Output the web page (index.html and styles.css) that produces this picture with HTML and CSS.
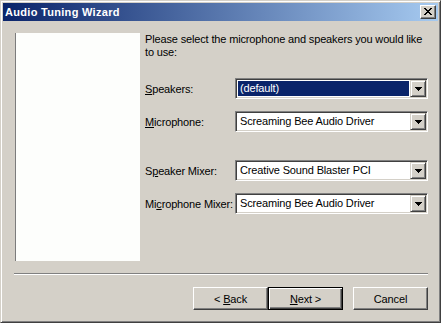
FILE: index.html
```html
<!DOCTYPE html>
<html lang="en">
  <head>
    <meta charset="UTF-8" />
    <meta name="viewport" content="width=device-width, initial-scale=1.0" />
    <title>Audio Tuning Wizard</title>
    <link rel="stylesheet" href="styles.css">
  </head>
  <body>
    <div class="window">
      <div class="titlebar">
        <span class="title">Audio Tuning Wizard</span>
        <button class="close-btn" aria-label="Close">
          <svg width="8" height="7" viewBox="0 0 8 7" shape-rendering="crispEdges">
            <path d="M0 0h2v1h-2zM6 0h2v1h-2zM1 1h2v1h-2zM5 1h2v1h-2zM2 2h4v1h-4zM3 3h2v1h-2zM2 4h4v1h-4zM1 5h2v1h-2zM5 5h2v1h-2zM0 6h2v1h-2zM6 6h2v1h-2z" fill="#000"/>
          </svg>
        </button>
      </div>
      <div class="client">
        <div class="main">
          <div class="picture"></div>
          <div class="content">
            <p class="intro">Please select the microphone and speakers you would like<br>to use:</p>
            <div class="field first">
              <span class="label"><u>S</u>peakers:</span>
              <div class="combo">
                <span class="value selected">(default)</span>
                <span class="drop"><svg width="7" height="4" viewBox="0 0 7 4" shape-rendering="crispEdges"><path d="M0 0h7v1h-7zM1 1h5v1h-5zM2 2h3v1h-3zM3 3h1v1h-1z" fill="#000"/></svg></span>
              </div>
            </div>
            <div class="field">
              <span class="label"><u>M</u>icrophone:</span>
              <div class="combo">
                <span class="value">Screaming Bee Audio Driver</span>
                <span class="drop"><svg width="7" height="4" viewBox="0 0 7 4" shape-rendering="crispEdges"><path d="M0 0h7v1h-7zM1 1h5v1h-5zM2 2h3v1h-3zM3 3h1v1h-1z" fill="#000"/></svg></span>
              </div>
            </div>
            <div class="field group">
              <span class="label">S<u>p</u>eaker Mixer:</span>
              <div class="combo">
                <span class="value">Creative Sound Blaster PCI</span>
                <span class="drop"><svg width="7" height="4" viewBox="0 0 7 4" shape-rendering="crispEdges"><path d="M0 0h7v1h-7zM1 1h5v1h-5zM2 2h3v1h-3zM3 3h1v1h-1z" fill="#000"/></svg></span>
              </div>
            </div>
            <div class="field">
              <span class="label">Mi<u>c</u>rophone Mixer:</span>
              <div class="combo">
                <span class="value">Screaming Bee Audio Driver</span>
                <span class="drop"><svg width="7" height="4" viewBox="0 0 7 4" shape-rendering="crispEdges"><path d="M0 0h7v1h-7zM1 1h5v1h-5zM2 2h3v1h-3zM3 3h1v1h-1z" fill="#000"/></svg></span>
              </div>
            </div>
          </div>
        </div>
        <div class="separator"></div>
        <div class="buttons">
          <button class="btn">&lt; <u>B</u>ack</button>
          <button class="btn default"><u>N</u>ext &gt;</button>
          <button class="btn cancel">Cancel</button>
        </div>
      </div>
    </div>
  </body>
</html>
```

FILE: styles.css
```css
/* Base */
html,
body {
  margin: 0;
  padding: 0;
  background-color: #d4d0c8;
  font-family: "Liberation Sans", Arial, sans-serif;
  font-size: 11px;
  letter-spacing: -0.15px;
  color: #000;
}

/* Window frame */
.window {
  width: 441px;
  height: 323px;
  box-sizing: border-box;
  border: 1px solid;
  border-color: #d4d0c8 #404040 #404040 #d4d0c8;
  box-shadow: inset 1px 1px #fff, inset -1px -1px #808080;
  padding: 2px;
  display: flex;
  flex-direction: column;
  background-color: #d4d0c8;
}

.titlebar {
  height: 18px;
  flex: none;
  display: flex;
  align-items: center;
  justify-content: space-between;
  padding: 0 2px;
  background: linear-gradient(to right, #0a246a, #a6caf0);
}

.title {
  color: #fff;
  font-weight: bold;
  font-size: 11px;
  letter-spacing: 0.3px;
}

.close-btn {
  width: 16px;
  height: 14px;
  padding: 0;
  margin: 0;
  box-sizing: border-box;
  display: flex;
  align-items: center;
  justify-content: center;
  background-color: #d4d0c8;
  border: 1px solid;
  border-color: #fff #404040 #404040 #fff;
  box-shadow: inset -1px -1px #808080;
}

.close-btn svg {
  display: block;
  margin: 0 1px 1px 0;
}

/* Client area */
.client {
  flex: 1;
  display: flex;
  flex-direction: column;
  padding: 12px 10px 0 11px;
}

.main {
  display: flex;
  height: 228px;
}

.picture {
  width: 125px;
  margin-left: 1px;
  box-sizing: border-box;
  border-left: 1px solid #7c7c7c;
  background-color: #fdfefc;
}

.content {
  flex: 1;
  margin-left: 5px;
}

.intro {
  margin: 0 0 19px;
  line-height: 13px;
  white-space: nowrap;
}

/* Form rows */
.field {
  display: flex;
  align-items: center;
  margin-top: 12px;
}

.field.first {
  margin-top: 0;
}

.field.group {
  margin-top: 28px;
}

.label {
  width: 90px;
  white-space: nowrap;
}

.combo {
  width: 193px;
  height: 21px;
  box-sizing: border-box;
  display: flex;
  background-color: #fff;
  border: 1px solid;
  border-color: #808080 #fff #fff #808080;
  box-shadow: inset 1px 1px #404040, inset -1px -1px #d4d0c8;
  padding: 1px;
}

.value {
  flex: 1;
  margin: 1px;
  padding-left: 2px;
  line-height: 15px;
  white-space: nowrap;
}

.value.selected {
  background-color: #0a246a;
  color: #fff;
}

.drop {
  width: 16px;
  height: 17px;
  box-sizing: border-box;
  display: flex;
  align-items: center;
  justify-content: center;
  background-color: #d4d0c8;
  border: 1px solid;
  border-color: #d4d0c8 #404040 #404040 #d4d0c8;
  box-shadow: inset 1px 1px #fff, inset -1px -1px #808080;
}

/* Separator and buttons */
.separator {
  margin-top: 12px;
  border-top: 1px solid #808080;
  border-bottom: 1px solid #fff;
}

.buttons {
  margin-top: 12px;
  display: flex;
  justify-content: flex-end;
}

.btn {
  width: 75px;
  height: 23px;
  box-sizing: border-box;
  padding: 0;
  font-family: "Liberation Sans", Arial, sans-serif;
  font-size: 11px;
  letter-spacing: -0.15px;
  color: #000;
  background-color: #d4d0c8;
  border: 1px solid;
  border-color: #fff #404040 #404040 #fff;
  box-shadow: inset -1px -1px #808080;
}

.btn.default {
  border-color: #000;
  box-shadow: inset 1px 1px #fff, inset -1px -1px #404040, inset -2px -2px #808080;
}

.btn.cancel {
  margin-left: 10px;
}
```
